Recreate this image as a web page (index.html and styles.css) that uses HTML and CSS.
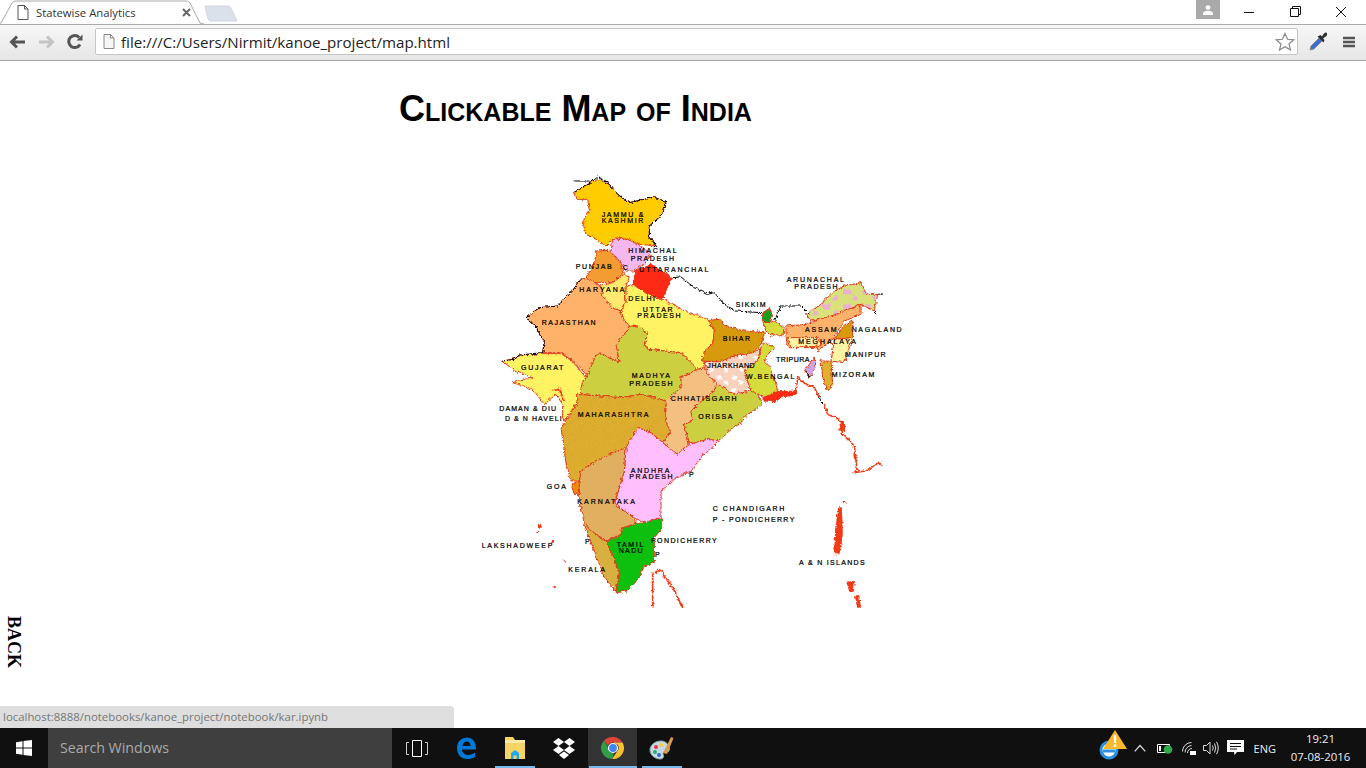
FILE: index.html

```html
<!DOCTYPE html>
<html lang="en">
<head>
  <meta charset="UTF-8" />
  <title>Statewise Analytics</title>
  <link rel="stylesheet" href="styles.css">
</head>
<body>
  <header class="browser">
    <div class="tabstrip">
      <div class="tab">
        <svg class="tab-shape" width="206" height="25" viewBox="0 0 206 25"><path d="M0 24 L3 23 L14 3 Q15 1 18 1 L188 1 Q191 1 192 3 L202 23 L206 24" fill="#fff" stroke="#a9a9a9"/></svg>
        <svg class="page-icon" width="12" height="15" viewBox="0 0 12 15"><path d="M1 .5H7.5L11 4V14.5H1Z M7.5 .5V4H11" fill="#fff" stroke="#555"/></svg>
        <span class="tab-title">Statewise Analytics</span>
        <svg class="tab-close" width="9" height="9" viewBox="0 0 9 9"><path d="M1 1L8 8M8 1L1 8" stroke="#666" stroke-width="2"/></svg>
      </div>
      <svg class="new-tab" width="34" height="17" viewBox="0 0 34 17"><path d="M1 1H24Q26 1 27 3L33 16H7Q5 16 4 14Z" fill="#dbe1ea" stroke="#d2d7df"/></svg>
      <div class="window-controls">
        <div class="avatar"><svg width="12" height="10" viewBox="0 0 12 10"><circle cx="6" cy="2.6" r="2.4" fill="#fff"/><path d="M1 10V8Q1 6.4 4 6H8Q11 6.4 11 8V10Z" fill="#fff"/></svg></div>
        <svg class="win-btn" width="46" height="24" viewBox="0 0 46 24"><path d="M18 12.5H28" stroke="#111"/></svg>
        <svg class="win-btn" width="46" height="24" viewBox="0 0 46 24"><path d="M18.500 8.500H26.500V16.500H18.500Z M20.500 8.500V6.500H28.500V14.500H26.500" fill="none" stroke="#111"/></svg>
        <svg class="win-btn" width="46" height="24" viewBox="0 0 46 24"><path d="M18 7L28 17M28 7L18 17" stroke="#111"/></svg>
      </div>
    </div>
    <div class="toolbar">
      <svg class="nav-icon" width="17" height="14" viewBox="0 0 17 14"><path d="M16 7H4M8 1.500L2.500 7L8 12.500" fill="none" stroke="#555" stroke-width="3"/></svg>
      <svg class="nav-icon" width="17" height="14" viewBox="0 0 17 14"><path d="M1 7H13M9 1.500L14.500 7L9 12.500" fill="none" stroke="#c4c4c4" stroke-width="3"/></svg>
      <svg class="nav-icon" width="16" height="16" viewBox="0 0 16 16"><path d="M13 10.500A6 6 0 1 1 12.200 3.500" fill="none" stroke="#555" stroke-width="3"/><path d="M9.500 6.500H15.500V.5Z" fill="#555"/></svg>
      <div class="omnibox">
        <svg class="url-icon" width="12" height="15" viewBox="0 0 12 15"><path d="M1 .5H7.500L11 4V14.500H1Z M7.500 .5V4H11" fill="#f6f6f6" stroke="#888"/></svg>
        <span class="url">file:///C:/Users/Nirmit/kanoe_project/map.html</span>
        <svg class="star" width="20" height="19" viewBox="0 0 20 19"><path d="M10 1.500L12.500 7.300L18.800 7.800L14 12L15.500 18L10 14.800L4.500 18L6 12L1.200 7.800L7.500 7.300Z" fill="#fff" stroke="#888" stroke-width="1.200"/></svg>
      </div>
      <svg class="dropper" width="20" height="20" viewBox="0 0 20 20"><path d="M2 18L3 14L11 6L14 9L6 17Z" fill="#3a6fd0" stroke="#888"/><path d="M9.500 4.500L15.500 10.500L16.500 8L15 6.500L18.500 4Q20 1.500 18 .5Q16.500 .2 14 4.500L12.500 3Z" fill="#2e2e2e"/></svg>
      <svg class="menu" width="14" height="12" viewBox="0 0 14 12"><path d="M1 2H13M1 6H13M1 10H13" stroke="#555" stroke-width="2.400"/></svg>
    </div>
  </header>

  <main class="page">
    <h1 class="title">Clickable Map of India</h1>

    <!-- map drawn in 3x units so 1 screen px = 3 units -->
    <svg class="india" width="430" height="445" viewBox="0 0 1290 1335">
      <defs>
        <filter id="rough" x="-2%" y="-2%" width="104%" height="104%">
          <feTurbulence type="turbulence" baseFrequency="0.07" numOctaves="2" seed="4"/>
          <feDisplacementMap in="SourceGraphic" scale="11" xChannelSelector="R" yChannelSelector="G"/>
        </filter>
        <pattern id="hatch" width="6" height="6" patternUnits="userSpaceOnUse" patternTransform="rotate(45)">
          <rect width="6" height="6" fill="#e0b030"/>
          <rect width="2" height="6" fill="#d4a52c"/>
        </pattern>
        <pattern id="speckle" width="44" height="38" patternUnits="userSpaceOnUse">
          <rect width="44" height="38" fill="#f9d2bd"/>
          <rect x="4" y="6" width="14" height="11" fill="#fff"/>
          <rect x="26" y="22" width="12" height="10" fill="#fff"/>
        </pattern>
        <pattern id="arunachal" width="60" height="44" patternUnits="userSpaceOnUse">
          <rect width="60" height="44" fill="#d9e27a"/>
          <rect x="6" y="4" width="24" height="14" fill="#e9b0d0"/>
          <rect x="36" y="24" width="14" height="12" fill="#e9b0d0"/>
        </pattern>
      </defs>

      <g class="states" filter="url(#rough)">
        <polygon fill="#ffcc00" points="278,65 330,35 350,25 385,40 410,70 445,95 490,85 520,78 555,95 545,130 505,165 505,195 525,225 480,220 440,205 400,200 375,225 345,205 315,190 305,150 325,120 320,85 290,85"/>
        <polygon fill="#f4b8ee" points="395,205 440,205 480,225 510,250 490,280 460,300 435,300 415,270 390,240"/>
        <polygon fill="#f39c33" points="345,240 385,238 415,275 430,305 395,335 340,335 315,322 340,280"/>
        <polygon fill="#ffb36b" points="300,325 315,322 360,345 365,375 395,410 420,420 430,450 450,465 405,520 410,545 415,575 355,545 340,565 325,620 275,570 240,545 185,545 190,510 175,490 165,465 135,440 175,410 230,405 270,365"/>
        <polygon fill="#ffe96e" points="395,335 430,310 445,320 432,350 435,395 420,420 395,410 365,375 360,345"/>
        <polygon fill="#fff263" points="435,345 460,340 500,370 545,385 620,425 680,445 700,480 695,520 665,560 670,590 650,595 600,545 500,535 490,520 500,490 480,470 450,465 430,450 420,420 435,395"/>
        <polygon fill="#ff2a12" points="460,300 490,290 510,275 530,295 575,320 560,350 545,385 500,370 460,340"/>
        <polygon fill="#d89a10" points="685,448 715,445 735,465 790,480 850,485 840,520 815,545 760,555 720,572 665,570 670,540 695,518 700,480"/>
        <polygon fill="url(#speckle)" points="670,572 720,572 760,555 815,545 840,530 830,570 790,600 810,660 760,670 710,640 680,610"/>
        <polygon fill="#d7dc3e" points="850,515 880,530 860,550 850,570 870,590 885,640 890,665 860,680 830,670 810,660 790,600 830,570 840,530"/>
        <polygon fill="#d7dc3e" points="845,452 865,455 880,450 910,470 905,495 885,490 870,495 855,480"/>
        <polygon fill="#1f9e1f" points="845,425 865,412 873,430 865,455 845,452"/>
        <polygon fill="#ff2a12" points="845,680 890,662 950,660 945,672 900,678 885,692 850,690"/>
        <polygon fill="url(#arunachal)" points="975,430 1020,400 1060,360 1090,345 1140,335 1155,370 1190,370 1180,420 1140,400 1080,430 1020,445 990,450"/>
        <polygon fill="#ffb36b" points="915,465 975,460 1020,445 1080,425 1140,400 1140,430 1090,450 1060,500 1010,545 1010,530 920,530 915,495"/>
        <polygon fill="#fff3a6" points="920,500 1010,500 1020,525 930,530"/>
        <polygon fill="#d89a10" points="1115,445 1115,500 1060,505 1090,465"/>
        <polygon fill="#fff3a6" points="1060,505 1115,500 1090,575 1050,570"/>
        <polygon fill="#e0b030" points="1020,570 1050,570 1055,640 1040,660 1025,620"/>
        <polygon fill="#d0a4e4" points="1000,560 1005,590 985,620 970,600"/>
        <polygon fill="#fff263" points="65,570 105,562 120,552 185,548 240,548 275,572 315,620 300,680 285,700 270,720 250,750 245,740 245,700 225,670 190,700 155,655 95,635 155,620 100,600"/>
        <polygon fill="#ccd040" points="315,620 340,565 355,545 415,575 410,545 405,520 450,465 480,470 500,490 490,520 500,535 600,545 650,595 600,620 600,650 570,675 555,690 480,670 420,680 290,670 295,695 300,650"/>
        <polygon fill="url(#hatch)" points="290,670 420,680 480,670 555,690 555,750 570,785 545,815 510,785 470,770 435,830 355,865 300,900 295,930 270,930 255,875 240,770 265,735 290,695"/>
        <polygon fill="#f4c080" points="600,620 650,595 670,590 680,610 710,640 695,665 650,700 630,720 635,750 610,760 625,820 590,850 545,815 570,785 555,750 555,690 570,675 600,650"/>
        <polygon fill="#ccd040" points="695,665 710,640 760,670 810,660 830,670 845,700 800,730 780,755 745,780 715,810 680,805 625,820 610,760 635,750 630,720 650,700"/>
        <polygon fill="#ffbfff" points="470,770 510,785 545,815 590,850 625,820 680,805 715,810 660,860 630,900 580,925 540,960 540,1040 490,1055 460,1040 430,1020 400,1000 415,950 430,900 435,830"/>
        <polygon fill="#e0b060" points="300,900 355,865 435,830 430,900 415,950 400,1000 430,1020 465,1045 465,1060 425,1070 420,1090 375,1110 345,1090 310,1060 295,980 295,930"/>
        <polygon fill="#ee8a10" points="270,940 295,930 295,970 280,970"/>
        <polygon fill="#d8b040" points="310,1060 345,1090 375,1112 395,1150 415,1205 405,1262 370,1220 340,1140"/>
        <polygon fill="#10c010" points="375,1112 420,1092 425,1070 465,1058 490,1055 545,1040 545,1070 520,1100 520,1175 490,1185 475,1220 440,1260 405,1265 415,1205 395,1150"/>
      </g>

      <g class="borders" filter="url(#rough)">
        <path d="M278 30H325M278 65L330 35L350 18L385 40L410 70L445 95L490 85L520 78L555 95L545 130L505 165L505 195L525 225"/>
        <path d="M575 320L600 318L640 350L680 370L700 365L730 400L765 420L840 425"/>
        <path d="M880 450L900 405L960 405L985 430M1190 370L1205 368M1180 420L1185 430"/>
        <path d="M300 325L270 365L230 405L175 410L135 440L165 465L175 490L190 510L185 545L115 552L100 565L65 570"/>
        <path d="M975 600L985 620L1000 612M1005 660L1020 690L1030 700"/>
      </g>

      <g class="coast" filter="url(#rough)">
        <path d="M1030 700L1040 730L1075 745L1085 790L1120 825L1128 895L1120 905L1155 900L1195 875L1205 885"/>
        <path d="M945 662L950 620L975 640L1000 650L1015 680"/>
        <path d="M515 1310V1210L535 1195L575 1250L605 1310"/>
        <path d="M210 660L235 655L250 690"/>
      </g>

      <g class="islands" filter="url(#rough)">
        <polygon points="1072,1010 1082,1008 1085,1060 1085,1100 1075,1150 1060,1150 1062,1080"/>
        <polygon points="1095,1232 1122,1230 1118,1262 1105,1262"/>
        <polygon points="1122,1276 1135,1275 1140,1310 1128,1310"/>
        <rect x="172" y="1062" width="10" height="12"/><rect x="166" y="1080" width="8" height="6"/><rect x="210" y="1110" width="8" height="6"/><rect x="248" y="1168" width="6" height="8"/><rect x="218" y="1245" width="6" height="6"/><rect x="1085" y="990" width="9" height="6"/>
        <rect x="1078" y="750" width="14" height="30"/>
      </g>

      <g class="labels">
        <text x="365" y="140" textLength="125">JAMMU &amp;</text>
        <text x="365" y="160" textLength="125">KASHMIR</text>
        <text x="445" y="248" textLength="145">HIMACHAL</text>
        <text x="452" y="272" textLength="130">PRADESH</text>
        <text x="287" y="298" textLength="108">PUNJAB</text>
        <text x="428" y="300">C</text>
        <text x="478" y="307" textLength="207">UTTARANCHAL</text>
        <text x="298" y="365" textLength="135">HARYANA</text>
        <text x="445" y="392" textLength="80">DELHI</text>
        <text x="488" y="425" textLength="90">UTTAR</text>
        <text x="472" y="445" textLength="130">PRADESH</text>
        <text x="185" y="464" textLength="162">RAJASTHAN</text>
        <text x="123" y="601" textLength="127">GUJARAT</text>
        <text x="455" y="623" textLength="115">MADHYA</text>
        <text x="448" y="647" textLength="130">PRADESH</text>
        <text x="920" y="335" textLength="172">ARUNACHAL</text>
        <text x="943" y="356" textLength="130">PRADESH</text>
        <text x="767" y="410" textLength="90">SIKKIM</text>
        <text x="728" y="512" textLength="82">BIHAR</text>
        <text x="975" y="485" textLength="95">ASSAM</text>
        <text x="1115" y="485" textLength="150">NAGALAND</text>
        <text x="955" y="521" textLength="173">MEGHALAYA</text>
        <text x="682" y="595" textLength="142">JHARKHAND</text>
        <text x="798" y="626" textLength="145">W.BENGAL</text>
        <text x="888" y="575" textLength="100">TRIPURA</text>
        <text x="1095" y="560" textLength="122">MANIPUR</text>
        <text x="1055" y="621" textLength="128">MIZORAM</text>
        <text x="572" y="692" textLength="198">CHHATISGARH</text>
        <text x="58" y="722" textLength="170">DAMAN &amp; DIU</text>
        <text x="75" y="752" textLength="170">D &amp; N HAVELI</text>
        <text x="293" y="740" textLength="212">MAHARASHTRA</text>
        <text x="655" y="747" textLength="102">ORISSA</text>
        <text x="452" y="908" textLength="116">ANDHRA</text>
        <text x="448" y="928" textLength="130">PRADESH</text>
        <text x="627" y="920">P</text>
        <text x="200" y="957" textLength="58">GOA</text>
        <text x="292" y="1002" textLength="173">KARNATAKA</text>
        <text x="698" y="1022" textLength="215">C  CHANDIGARH</text>
        <text x="698" y="1055" textLength="245">P - PONDICHERRY</text>
        <text x="5" y="1133" textLength="212">LAKSHADWEEP</text>
        <text x="315" y="1123">P</text>
        <text x="410" y="1130" textLength="80">TAMIL</text>
        <text x="416" y="1150" textLength="72">NADU</text>
        <text x="513" y="1120" textLength="197">PONDICHERRY</text>
        <text x="525" y="1162">P</text>
        <text x="265" y="1205" textLength="110">KERALA</text>
        <text x="957" y="1184" textLength="197">A &amp; N ISLANDS</text>
      </g>
    </svg>

    <a class="back" href="#">BACK</a>
    <div class="status-bubble">localhost:8888/notebooks/kanoe_project/notebook/kar.ipynb</div>
  </main>

  <footer class="taskbar">
    <div class="start">
      <svg width="16" height="16" viewBox="0 0 16 16"><path d="M0 2.200L6.500 1.300V7.500H0ZM7.500 1.100L16 0V7.500H7.500ZM0 8.500H6.500V14.700L0 13.800ZM7.500 8.500H16V16L7.500 14.900Z" fill="#fff"/></svg>
    </div>
    <div class="search">Search Windows</div>
    <div class="task-item">
      <svg width="22" height="17" viewBox="0 0 22 17"><path d="M6.500 .5H15.500V16.500H6.500Z" fill="none" stroke="#fff"/><path d="M3 2.500H.5V14.500H3M19 2.500H21.500V14.500H19" fill="none" stroke="#ccc"/></svg>
    </div>
    <div class="task-item">
      <svg width="20" height="22" viewBox="0 0 20 22"><path d="M1 11C1 4 6 .5 11 .5C16 .5 20 4 20 12.500H6C6 16 9 18 12 18C15 18 17 17 19 15.500V20C16.500 21.500 14 22 11.500 22C5 22 1 17.500 1 11ZM6.500 9H14.500C14.500 6 13 4.500 10.500 4.500C8.500 4.500 7 6 6.500 9Z" fill="#0078d7"/></svg>
    </div>
    <div class="task-item on">
      <svg width="22" height="24" viewBox="0 0 22 24"><path d="M1 1H9L11 4H21V23H1Z" fill="#f6d365"/><path d="M1 4H21V7H1Z" fill="#fbe9a6"/><path d="M7 23V17L11 14L15 17V23H12.500V19.500H9.500V23Z" fill="#1eaaf1"/></svg>
    </div>
    <div class="task-item">
      <svg width="24" height="23" viewBox="0 0 24 23"><path d="M6.500 1L12 5L6.500 9L1 5ZM17.500 1L23 5L17.500 9L12 5ZM6.500 9L12 13L6.500 17L1 13ZM17.500 9L23 13L17.500 17L12 13ZM7 18L12 14.500L17 18L12 22Z" fill="#fff"/></svg>
    </div>
    <div class="task-item on active">
      <svg width="24" height="24" viewBox="0 0 24 24"><path d="M12 1A11 11 0 0 1 21.500 6.500H12A5.500 5.500 0 0 0 6.800 10L3 4.500A11 11 0 0 1 12 1Z" fill="#db4437"/><path d="M21.500 6.500A11 11 0 0 1 11 23L16.500 15A5.500 5.500 0 0 0 16.800 8.800L12 6.500Z" fill="#fbc02d"/><path d="M3 4.500L7 11.500A5.500 5.500 0 0 0 13 17.400L11 23A11 11 0 0 1 3 4.500Z" fill="#2e9e49"/><circle cx="12" cy="12" r="4.500" fill="#4285f4" stroke="#fff" stroke-width="1.200"/></svg>
    </div>
    <div class="task-item on">
      <svg width="26" height="26" viewBox="0 0 26 26"><path d="M12 6C5 6 1 11 1 15C1 20 6 24 11 24C15 24 15 21 14 19C13.500 17.500 15 16.500 17 17C20 17.500 21 15 20 12C19 8.500 16 6 12 6Z" fill="#c3d9e8" stroke="#8aa"/><circle cx="7" cy="12" r="2" fill="#e34"/><circle cx="12" cy="10" r="2" fill="#fc3"/><circle cx="6" cy="17" r="2" fill="#3a6"/><circle cx="10" cy="20" r="2" fill="#36c"/><path d="M14 18L22 2L24.500 3L18 19Z" fill="#d99a4a"/></svg>
    </div>

    <div class="tray">
      <svg class="tray-ie" width="30" height="32" viewBox="0 0 30 32"><circle cx="11" cy="21" r="8" fill="#fff" stroke="#2a8fe0" stroke-width="3"/><path d="M5 22H17" stroke="#2a8fe0" stroke-width="3"/><path d="M17 1L29 20H5Z" fill="#fbb829"/><path d="M17 6V14M17 15.500V18" stroke="#fff" stroke-width="2.400"/></svg>
      <svg class="tray-caret" width="12" height="8" viewBox="0 0 12 8"><path d="M.7 7.300L6 1.500L11.300 7.300" fill="none" stroke="#ddd" stroke-width="1.200"/></svg>
      <svg class="tray-power" width="17" height="12" viewBox="0 0 17 12"><path d="M1.500 2.500H13.500V10.500H1.500Z" fill="none" stroke="#fff"/><path d="M3 4H5V9H3Z" fill="#fff"/><circle cx="12" cy="7.500" r="4.300" fill="#2fa84f"/></svg>
      <svg class="tray-wifi" width="14" height="13" viewBox="0 0 14 13"><path d="M.5 9.500A9 9 0 0 1 9.500 .5M3 10.500A7 7 0 0 1 9.500 3.500M5.500 11A4.500 4.500 0 0 1 10 6.500" fill="none" stroke="#ddd"/><path d="M8 9H14V13H8Z" fill="#fff"/></svg>
      <svg class="tray-sound" width="16" height="14" viewBox="0 0 16 14"><path d="M.5 4.500H3.500L7 1V13L3.500 9.500H.5Z" fill="none" stroke="#ddd"/><path d="M9.500 4.500Q11 7 9.500 9.500M11.500 2.500Q14 7 11.500 11.500M13.500 .8Q17 7 13.500 13.200" fill="none" stroke="#ddd"/></svg>
      <svg class="tray-note" width="17" height="16" viewBox="0 0 17 16"><path d="M0 0H17V12H10L7.500 15L7 12H0Z" fill="#fff"/><path d="M3 3.500H14M3 6.500H14M3 9H10" stroke="#101010"/></svg>
      <span class="tray-lang">ENG</span>
      <div class="clock"><span>19:21</span><span>07-08-2016</span></div>
    </div>
  </footer>
</body>
</html>
```

FILE: styles.css

```css
* {
  box-sizing: border-box;
}

html, body {
  height: 100%;
}

body {
  margin: 0;
  display: flex;
  flex-direction: column;
  overflow: hidden;
  background: #fff;
  font-family: 'Open Sans', 'Liberation Sans', sans-serif;
}

/* browser chrome */
.browser {
  flex: none;
  height: 61px;
}

.tabstrip {
  display: flex;
  height: 25px;
  background: #fff;
  border-bottom: 1px solid #a9a9a9;
}

.tab {
  position: relative;
  display: flex;
  align-items: center;
  width: 206px;
  height: 25px;
  padding: 0 13px 0 19px;
  margin-left: -2px;
}

.tab-shape {
  position: absolute;
  left: 0;
  top: 0;
}

.page-icon,
.tab-title,
.tab-close {
  position: relative;
}

.tab-title {
  margin-left: 7px;
  flex: 1;
  font-size: 11.300px;
  color: #333;
}

.new-tab {
  margin: 5px 0 0 0;
}

.window-controls {
  display: flex;
  margin-left: auto;
  margin-right: 2px;
}

.avatar {
  display: flex;
  align-items: center;
  justify-content: center;
  width: 24px;
  height: 19px;
  margin-right: 6px;
  background: #a9a9a9;
}

.win-btn {
  display: block;
}

.toolbar {
  display: flex;
  align-items: center;
  height: 36px;
  padding: 0 9px 2px 9px;
  background: linear-gradient(#f7f7f7, #e6e6e6);
  border-bottom: 1px solid #a6a6a6;
}

.nav-icon {
  margin-right: 12px;
}

.omnibox {
  display: flex;
  align-items: center;
  width: 1203px;
  height: 27px;
  margin: 0 10px 0 0;
  padding: 0 2px 0 7px;
  background: #fff;
  border: 1px solid #c6c6c6;
  border-radius: 2px;
}

.url {
  margin-left: 6px;
  flex: 1;
  font-size: 15.100px;
  color: #222;
}

.dropper {
  margin-right: 14px;
}

/* page */
.page {
  position: relative;
  flex: 1;
  min-height: 0;
}

.title {
  margin: 23px 0 0 399px;
  height: 50px;
  font-family: 'Liberation Sans', Arial, sans-serif;
  font-size: 36px;
  font-weight: bold;
  font-variant: small-caps;
  line-height: 50px;
  color: #000;
}

.india {
  display: block;
  margin: 36px 0 0 480px;
}

.states polygon {
  stroke: #dd3a1a;
  stroke-width: 3;
  stroke-linejoin: round;
}

.borders path {
  fill: none;
  stroke: #000;
  stroke-width: 3;
}

.coast path {
  fill: none;
  stroke: #f03a18;
  stroke-width: 5;
}

.islands polygon,
.islands rect {
  fill: #f03a18;
}

.labels text {
  font-family: 'Liberation Sans', Arial, sans-serif;
  font-size: 21px;
  fill: #000;
  stroke: #000;
  stroke-width: 0.7;
}

.back {
  display: block;
  width: 18px;
  margin: 1px 0 0 5px;
  writing-mode: vertical-rl;
  font-family: 'Liberation Serif', 'Times New Roman', serif;
  font-size: 18px;
  font-weight: bold;
  line-height: 18px;
  color: #000;
  text-decoration: none;
}

.status-bubble {
  position: absolute;
  left: 0;
  bottom: 0;
  width: 454px;
  height: 22px;
  padding: 3px 0 0 3px;
  background: #dedede;
  border-top-right-radius: 4px;
  font-size: 11.400px;
  color: #777;
}

/* windows taskbar */
.taskbar {
  flex: none;
  display: flex;
  align-items: center;
  height: 40px;
  background: #101010;
}

.start {
  display: flex;
  align-items: center;
  justify-content: center;
  width: 48px;
  height: 40px;
}

.search {
  width: 344px;
  height: 40px;
  padding-left: 12px;
  background: #3f3f3f;
  font-size: 14.200px;
  line-height: 40px;
  color: #aaa;
}

.task-item {
  position: relative;
  display: flex;
  align-items: center;
  justify-content: center;
  width: 49px;
  height: 40px;
}

.task-item.on::after {
  content: "";
  position: absolute;
  left: 5px;
  right: 4px;
  bottom: 0;
  height: 2px;
  background: #76b9ed;
}

.task-item.active {
  background: #333;
}

.task-item.active::after {
  left: 1px;
  right: 0;
}

.tray {
  display: flex;
  align-items: center;
  margin-left: auto;
  margin-right: 7px;
  height: 40px;
  color: #eee;
}

.tray-ie {
  margin: -6px 6px 0 0;
}

.tray-caret {
  margin-right: 10px;
}

.tray-power {
  margin-right: 9px;
}

.tray-wifi {
  margin-right: 7px;
}

.tray-sound {
  margin-right: 8px;
}

.tray-note {
  margin-right: 10px;
}

.tray-lang {
  font-size: 11px;
}

.clock {
  display: flex;
  flex-direction: column;
  align-items: center;
  width: 76px;
  margin-left: 7px;
  padding-right: 1px;
  font-size: 11.400px;
  line-height: 18px;
}
```
